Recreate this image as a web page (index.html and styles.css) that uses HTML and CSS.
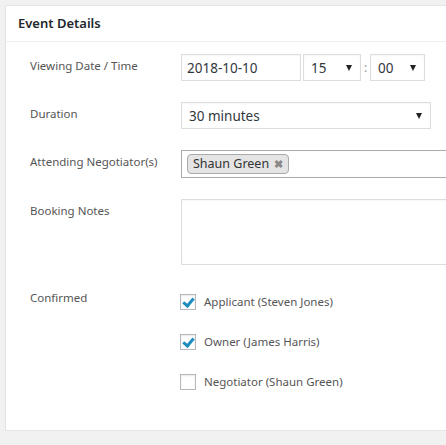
FILE: index.html
```html
<!DOCTYPE html>
<html>
<head>
    <title>Event Details</title>
    <meta charset="UTF-8">
    <link rel="stylesheet" href="styles.css">
</head>
<body>
    <div class="postbox">
        <h2 class="postbox-title">Event Details</h2>
        <div class="inside">
            <div class="row">
                <label class="row-label" for="viewing_date">Viewing Date / Time</label>
                <div class="row-field">
                    <input type="text" id="viewing_date" class="text-input date-input" value="2018-10-10">
                    <span class="select-wrap hour-wrap">
                        <select class="select-input">
                            <option>15</option>
                        </select>
                    </span>
                    <span class="time-sep">:</span>
                    <span class="select-wrap minute-wrap">
                        <select class="select-input">
                            <option>00</option>
                        </select>
                    </span>
                </div>
            </div>
            <div class="row">
                <label class="row-label" for="duration">Duration</label>
                <div class="row-field">
                    <span class="select-wrap duration-wrap">
                        <select id="duration" class="select-input">
                            <option>30 minutes</option>
                        </select>
                    </span>
                </div>
            </div>
            <div class="row">
                <label class="row-label">Attending Negotiator(s)</label>
                <div class="row-field">
                    <div class="multi-select">
                        <span class="tag">Shaun Green <span class="tag-remove">&#10006;</span></span>
                    </div>
                </div>
            </div>
            <div class="row">
                <label class="row-label" for="notes">Booking Notes</label>
                <div class="row-field">
                    <textarea id="notes" class="notes-input"></textarea>
                </div>
            </div>
            <div class="row">
                <label class="row-label">Confirmed</label>
                <div class="row-field checks">
                    <label class="check"><input type="checkbox" checked> Applicant (Steven Jones)</label>
                    <label class="check"><input type="checkbox" checked> Owner (James Harris)</label>
                    <label class="check"><input type="checkbox"> Negotiator (Shaun Green)</label>
                </div>
            </div>
        </div>
    </div>
</body>
</html>
```

FILE: styles.css
```css
body { margin: 0; background: #f1f1f1; font-family: "Noto Sans", "Open Sans", sans-serif; font-size: 11.5px; color: #555; }
.postbox { margin: 5px 0 0 5px; background: #fff; border: 1px solid #e5e5e5; border-right: none; box-shadow: 0 1px 1px rgba(0,0,0,0.04); overflow: hidden; }
.postbox-title { margin: 0; padding: 0 12px; height: 35px; line-height: 34px; font-size: 13px; font-weight: 600; color: #23282d; border-bottom: 1px solid #eee; }
.inside { padding: 12px 0 40px 24px; display: flex; flex-direction: column; gap: 21px; }
.row { display: flex; align-items: flex-start; }
.row-label { width: 151px; flex: none; padding-top: 3px; line-height: 18px; color: #555; }
.row-field { display: flex; align-items: center; }
.text-input, .select-input, .notes-input { box-sizing: border-box; border: 1px solid #ddd; background: #fff; font-family: inherit; font-size: 13.5px; color: #32373c; box-shadow: inset 0 1px 2px rgba(0,0,0,0.04); }
.text-input { height: 27px; padding: 0 5px; }
.date-input { width: 120px; }
.select-wrap { position: relative; display: inline-block; }
.select-wrap::after { content: ""; position: absolute; top: 11px; right: 9px; border-left: 3.5px solid transparent; border-right: 3.5px solid transparent; border-top: 6px solid #222; pointer-events: none; }
.select-input { -webkit-appearance: none; appearance: none; height: 27px; padding: 0 5px 0 7px; border-radius: 0; }
.hour-wrap { margin-left: 2px; }
.hour-wrap .select-input { width: 58px; }
.time-sep { width: 9px; text-align: center; color: #999; font-size: 12px; }
.minute-wrap .select-input { width: 55px; }
.duration-wrap .select-input { width: 250px; }
.multi-select { box-sizing: border-box; width: 280px; height: 28px; border: 1px solid #aaa; padding: 3px 5px; }
.tag { display: inline-block; box-sizing: border-box; height: 20px; line-height: 18px; padding: 0 5px; background: #e4e4e4; border: 1px solid #aaa; border-radius: 4px; font-size: 12.5px; color: #333; }
.tag-remove { color: #888; font-size: 11px; font-weight: bold; margin-left: 2px; }
.notes-input { width: 280px; height: 66px; resize: none; display: block; }
.checks { flex-direction: column; align-items: flex-start; gap: 24px; padding-top: 8px; margin-left: -1px; }
.check { display: flex; align-items: center; height: 16px; line-height: 16px; color: #555; }
.check input { -webkit-appearance: none; appearance: none; width: 16px; height: 16px; margin: 0 8px 0 0; border: 1px solid #b4b9be; background: #fff; box-shadow: inset 0 1px 2px rgba(0,0,0,0.1); position: relative; }
.check input:checked::before { content: ""; position: absolute; left: 4px; top: 1px; width: 4px; height: 8px; border-right: 3px solid #1e8cbe; border-bottom: 3px solid #1e8cbe; transform: rotate(40deg); }
```
